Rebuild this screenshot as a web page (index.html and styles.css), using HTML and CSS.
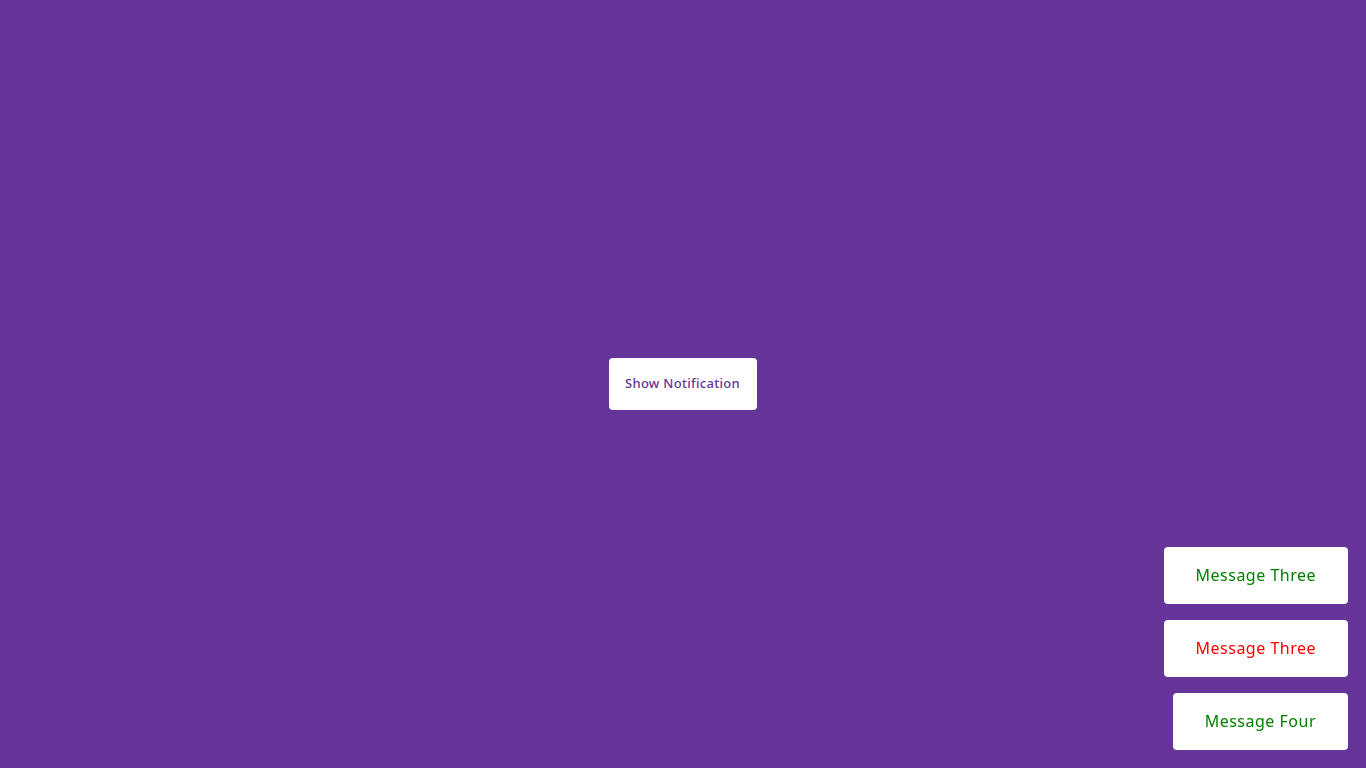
FILE: index.html
```html
<!DOCTYPE html>
<html lang="en">
<head>
<meta charset="utf-8">
<title>Notifications</title>
<link rel="stylesheet" href="styles.css">
</head>
<body>
<main class="stage">
  <button class="show-btn" type="button">Show Notification</button>
</main>
<div class="toasts">
  <div class="toast toast-success">Message Three</div>
  <div class="toast toast-error">Message Three</div>
  <div class="toast toast-success">Message Four</div>
</div>
</body>
</html>
```
FILE: styles.css
```css
* { box-sizing: border-box; }
html, body { margin: 0; height: 100%; }
body {
  background: #663399;
  font-family: "Noto Sans", "Open Sans", sans-serif;
  overflow: hidden;
}
.stage {
  height: 100vh;
  display: flex;
  align-items: center;
  justify-content: center;
}
.show-btn {
  width: 148px;
  height: 52px;
  margin-top: -1px;
  margin-left: -1px;
  padding: 0 0 2px;
  background: #fff;
  color: #663399;
  border: none;
  border-radius: 4px;
  font-family: inherit;
  font-size: 13px;
  font-weight: 500;
  letter-spacing: 0.3px;
  cursor: pointer;
}
.toasts {
  position: fixed;
  right: 18px;
  bottom: 18px;
  display: flex;
  flex-direction: column;
  align-items: flex-end;
  gap: 16px;
}
.toast {
  background: #fff;
  border-radius: 4px;
  height: 57px;
  padding: 0 32px 2px;
  display: flex;
  align-items: center;
  font-size: 16px;
  line-height: 1;
  letter-spacing: 0.5px;
}
.toast-success { color: #008000; }
.toast-error { color: #ff0000; }
```
